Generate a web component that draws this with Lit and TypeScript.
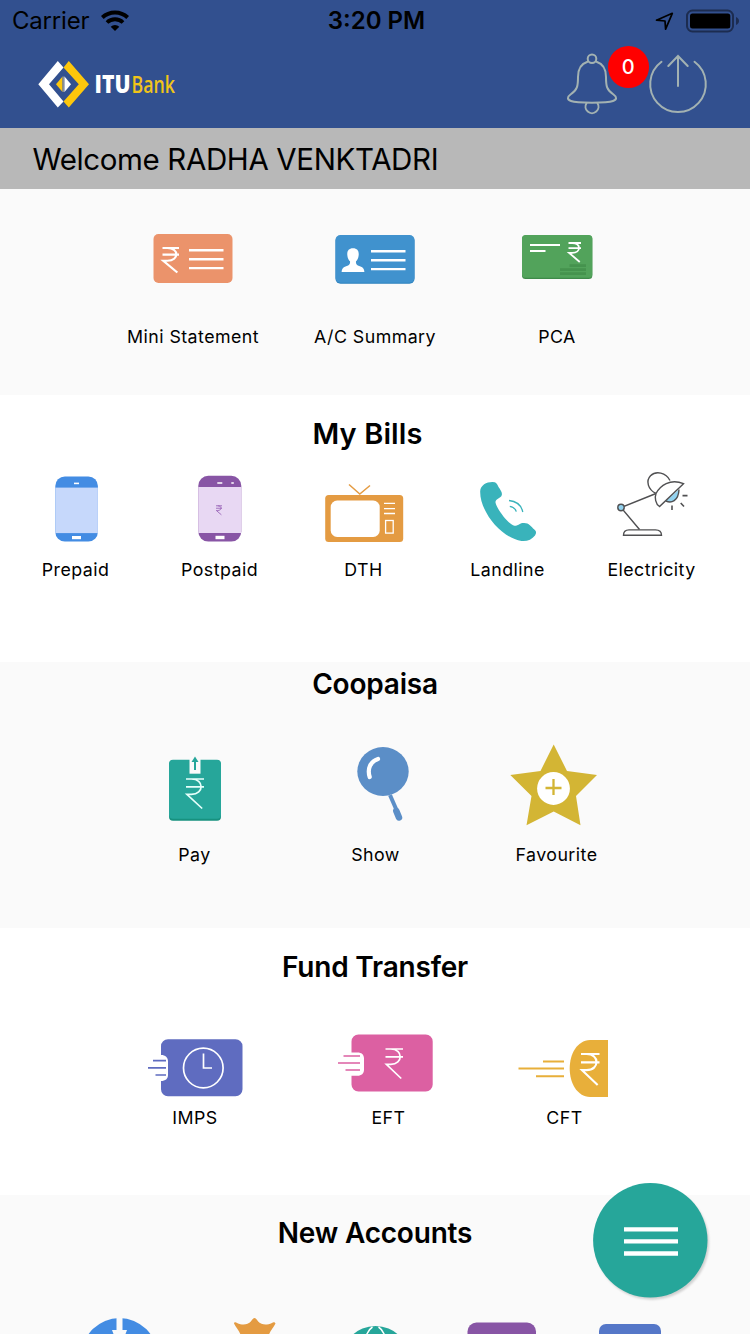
import { LitElement, html, svg, css, TemplateResult, SVGTemplateResult } from "lit";
import { customElement } from "lit/decorators.js";

interface Tile {
  label: string;
  art: SVGTemplateResult;
}

/* Rupee sign drawn with strokes inside the given box. */
const rupee = (x: number, y: number, w: number, h: number, sw: number, color = "#fff") => {
  const mid = y + h * 0.27;
  const low = y + h * 0.52;
  return svg`<path fill="none" stroke=${color} stroke-width=${sw}
    d="M${x} ${y}H${x + w}M${x} ${mid}H${x + w}M${x + w * 0.3} ${y}C${x + w * 1.02} ${y} ${x + w * 1.02} ${low} ${x + w * 0.3} ${low}H${x + w * 0.05}L${x + w * 0.9} ${y + h}"/>`;
};

const quick: Tile[] = [
  {
    label: "Mini Statement",
    art: svg`<svg class="icon" width="182" height="60" viewBox="102 229 182 60">
      <rect x="153.5" y="234" width="79" height="49" rx="5" fill="#eb936b"/>
      ${rupee(162.5, 248, 16.5, 24.5, 2.2)}
      <path d="M189 250.3h34.5M189 259.2h34.5M189 268.1h34.5" stroke="#fff" stroke-width="2.4"/></svg>`,
  },
  {
    label: "A/C Summary",
    art: svg`<svg class="icon" width="182" height="60" viewBox="284 229 182 60">
      <rect x="335.5" y="235.8" width="79" height="48" rx="5" fill="#2a80bd"/>
      <rect x="335.5" y="235" width="79" height="47.8" rx="5" fill="#4092ce"/>
      <path d="M353 248.3c4.300 0 6 2.600 5.700 6.600c-.2 3.500-1.600 5.200-2.700 6.400c-.4 3.500 1 4 4.500 5.300c2.600 1 3.700 2.400 3.900 5.400h-22.800c.2-3 1.300-4.400 3.900-5.400c3.500-1.300 4.900-1.800 4.500-5.300c-1.100-1.200-2.500-2.900-2.700-6.400c-.3-4 1.400-6.600 5.700-6.600z" fill="#fff"/>
      <path d="M371 251.300h34.500M371 260.200h34.500M371 269.100h34.500" stroke="#fff" stroke-width="2.400"/></svg>`,
  },
  {
    label: "PCA",
    art: svg`<svg class="icon" width="182" height="60" viewBox="466 229 182 60">
      <rect x="522" y="235.500" width="70.300" height="43.500" rx="3.500" fill="#3e8a49"/>
      <rect x="522" y="235" width="70.300" height="42.800" rx="3.500" fill="#52a35b"/>
      <path d="M530 245h30M530 251h15.500" stroke="#fff" stroke-width="1.800"/>
      <path d="M569.500 265.700h16.500M560 269.600h26M560 273.600h26" stroke="#45934e" stroke-width="2.700"/>
      ${rupee(568.5, 243, 12.5, 19, 1.8)}</svg>`,
  },
];

const bills: Tile[] = [
  {
    label: "Prepaid",
    art: svg`<svg class="icon" width="144" height="80" viewBox="3 468 144 80">
      <rect x="55.300" y="476.500" width="42.600" height="65" rx="9.500" fill="#438ce3"/>
      <rect x="55.300" y="487.600" width="42.600" height="45.500" fill="#c6d8fb"/>
      <path d="M74 483.400h5" stroke="#fff" stroke-width="1.600"/>
      <rect x="72" y="536" width="9" height="3.200" fill="#fff"/></svg>`,
  },
  {
    label: "Postpaid",
    art: svg`<svg class="icon" width="144" height="80" viewBox="147 468 144 80">
      <rect x="198.300" y="475.800" width="43" height="65.800" rx="10" fill="#8855a5"/>
      <rect x="198.300" y="487" width="43" height="46" fill="#e8d8f3"/>
      <path d="M217.300 483h5M231.300 483h2.500" stroke="#fff" stroke-width="1.600"/>
      <rect x="215.500" y="535.800" width="9" height="3.400" fill="#fff"/>
      ${rupee(216, 505.8, 6, 9, 0.9, "#9a65b8")}</svg>`,
  },
  {
    label: "DTH",
    art: svg`<svg class="icon" width="144" height="80" viewBox="291 468 144 80">
      <path d="M349 484.500L359.800 494L370 485.500" fill="none" stroke="#e49b42" stroke-width="1.500"/>
      <rect x="325.200" y="495" width="78" height="47" rx="3.500" fill="#e49b42"/>
      <rect x="330.700" y="500.500" width="49" height="36.500" rx="6.500" fill="#fff"/>
      <path d="M384 503.400h11M384 508.600h11M384 513.500h11" stroke="#fff" stroke-width="1.300"/>
      <rect x="385.600" y="520.500" width="7.600" height="12.600" fill="none" stroke="#fff" stroke-width="1.300"/></svg>`,
  },
  {
    label: "Landline",
    art: svg`<svg class="icon" width="144" height="80" viewBox="435 468 144 80">
      <path d="M480.200 491C480.500 485 487 481.700 493 482C496 482.200 497 483.500 498.500 487C500.500 490 502.500 492.500 501.800 495C501 498.500 495 498.800 495.500 502.500C496.500 508.500 508 524 514.500 525.800C518.500 526 519 523 523.500 523C529 522.700 531 526.500 534.300 529.500C536.500 531.500 536.600 533 535 535.500C532 539.500 527 541.600 521.500 541C501 538 479.500 511 480.200 491Z" fill="#39b3bb"/>
      <path d="M509 500.500c7.500.7 12.300 4.800 13.800 11.500M509.800 506.300c3.500.5 5.500 2.300 6.500 5.300" fill="none" stroke="#39b3bb" stroke-width="1.300"/></svg>`,
  },
  {
    label: "Electricity",
    art: svg`<svg class="icon" width="144" height="80" viewBox="579 468 144 80">
      <g stroke="#505052" stroke-width="1.400" fill="none">
        <path d="M656 493.500L621 507.500L639.500 529.500"/>
        <path d="M656 493.500C648 489.500 645.500 481 650.500 475.800C656 470.500 666 472.500 670 480.500"/>
        <path d="M666 501C671 503.500 678.500 501.500 679 489.500" fill="#92d2ef"/>
        <path d="M659.500 506.500C655.500 504 654.500 497.500 656 493.500C660 486 670 478 683.500 483.700Z" fill="#fff"/>
        <circle cx="621" cy="507.500" r="3.200" fill="#92d2ef"/>
        <path d="M623.500 535.200c0-4 2-5.300 5.500-5.300h26.500c4 0 6 2 6 5.300z" fill="#fff"/>
      </g>
      <path d="M682.500 495.600h5M680.700 503l3.300 3.500M672 505.500v4.500" stroke="#505052" stroke-width="1.600"/></svg>`,
  },
];

const coopaisa: Tile[] = [
  {
    label: "Pay",
    art: svg`<svg class="icon" width="181" height="90" viewBox="104 740 181 90">
      <rect x="169" y="761" width="52" height="59.800" rx="4" fill="#17917f"/>
      <rect x="169" y="759.800" width="52" height="59" rx="4" fill="#26a69a"/>
      <rect x="189.500" y="757" width="11" height="16.700" fill="#fafafa"/>
      <path d="M195 770v-11" stroke="#26a69a" stroke-width="2"/><path d="M191.500 762l3.500-5.500 3.500 5.500z" fill="#26a69a"/>
      ${rupee(186, 779, 18, 29.5, 1.7, "#e6fffb")}</svg>`,
  },
  {
    label: "Show",
    art: svg`<svg class="icon" width="181" height="90" viewBox="285 740 181 90">
      <ellipse cx="383" cy="771.500" rx="25.700" ry="24.400" fill="#5b8ec7"/>
      <path d="M390 795l6.500 15" stroke="#5b8ec7" stroke-width="4"/>
      <path d="M396.300 811l2.700 6.500" stroke="#5b8ec7" stroke-width="6.500" stroke-linecap="round"/>
      <path d="M378 759c-7.500 2.500-11 9.500-8.300 18" fill="none" stroke="#fff" stroke-width="4.200" stroke-linecap="round"/></svg>`,
  },
  {
    label: "Favourite",
    art: svg`<svg class="icon" width="181" height="90" viewBox="466 740 181 90">
      <path d="M553.700 744.500L567 771L597 775L576 796L580.500 825.300L553.700 811.500L526.500 825.300L531.500 796L510.300 775L540.500 771Z" fill="#d3b534"/>
      <circle cx="553.500" cy="788.500" r="16.400" fill="#fff"/>
      <path d="M545.500 788h16M553.500 779v16" stroke="#d3b534" stroke-width="2.300"/></svg>`,
  },
];

const transfer: Tile[] = [
  {
    label: "IMPS",
    art: svg`<svg class="icon" width="194" height="76" viewBox="98 1028 194 76">
      <path d="M168 1039.300h67.500a7 7 0 0 1 7 7v43a7 7 0 0 1-7 7h-67.500a7 7 0 0 1-7-7v-8.300c4.500 0 7-2.300 7-6v-13.500c0-4-2.500-6.500-7-6.500v-8.700a7 7 0 0 1 7-7z" fill="#5f6cc0"/>
      <path d="M153 1060.700h13M148 1067.800h18M155.500 1075h10.500" stroke="#5f6cc0" stroke-width="1.700"/>
      <circle cx="203.300" cy="1068" r="19.800" fill="none" stroke="#fff" stroke-width="1.700"/>
      <path d="M203.500 1053.500v14.500h8.500" fill="none" stroke="#fff" stroke-width="1.700"/></svg>`,
  },
  {
    label: "EFT",
    art: svg`<svg class="icon" width="193" height="76" viewBox="292 1028 193 76">
      <path d="M358.500 1034.500h67.200a7 7 0 0 1 7 7v43a7 7 0 0 1-7 7h-67.200a7 7 0 0 1-7-7v-8.800h6c4 0 6.500-2.300 6.500-6v-11.200c0-4-2.500-6-6.500-6h-6v-11a7 7 0 0 1 7-7z" fill="#dc60a2"/>
      <path d="M343.500 1056h16.500M338 1063h22M345.500 1070h14.500" stroke="#dc60a2" stroke-width="1.700"/>
      ${rupee(385.5, 1049, 17.5, 29.5, 1.7)}</svg>`,
  },
  {
    label: "CFT",
    art: svg`<svg class="icon" width="159" height="76" viewBox="485 1028 159 76">
      <path d="M608 1040V1097H590C577 1096.500 569.700 1083 569.700 1068.500C569.700 1054 577 1040.500 590 1040Z" fill="#e8af3a"/>
      <path d="M543 1061.500h21M518.500 1068.500h45.500M536 1076.300h28" stroke="#e8af3a" stroke-width="2"/>
      ${rupee(581, 1054, 18.5, 31, 2.1)}</svg>`,
  },
];

const accountsArt = svg`<svg class="accounts" width="750" height="18" viewBox="0 1316 750 18">
  <circle cx="119.500" cy="1355.800" r="37.800" fill="#438ce3"/>
  <path d="M116.500 1316h6v14h4.500l-3 8h-9l-3-8h4.500z" fill="#fafafa"/>
  <path d="M234 1323.500c0-1.500 2-1.500 3-.6c4 1.800 7.500 1.800 10.500 .9c3-1.200 4-3.200 5.500-5c1-1 2-1 3 0c1.500 1.800 2.500 3.800 5.500 5c3 .9 6.500.9 10.500-.9c1-.9 3-.9 3.500.6c-2 4-5 7-6.500 11h-28.500c-1.500-4-4.500-7-6.500-11z" fill="#e49b42"/>
  <circle cx="375.500" cy="1360" r="34" fill="#26a69a"/>
  <path d="M372.500 1327q-4 2.500-6 8M378.500 1327q4 2.500 6 8" fill="none" stroke="#fff" stroke-width="1.500"/>
  <rect x="467.500" y="1322.500" width="68.500" height="40" rx="9" fill="#8855a5"/>
  <rect x="599" y="1324" width="62" height="40" rx="7" fill="#5577c8"/></svg>`;

@customElement("app-root")
export class AppRoot extends LitElement {
  static styles = css`
    :host {
      display: block;
      position: relative;
      width: 750px;
      height: 1334px;
      overflow: hidden;
      background: #fff;
      color: #000;
      font-family: Inter, "Liberation Sans", sans-serif;
    }
    svg { display: block; flex: none; }
    .top { background: #32508f; height: 128px; }
    .status {
      display: grid;
      grid-template-columns: 1fr auto 1fr;
      align-items: center;
      height: 41px;
      padding: 0 11px 0 12px;
      font-size: 24px;
      line-height: 41px;
    }
    .left, .right { display: flex; align-items: center; }
    .left { gap: 12px; }
    .carrier { letter-spacing: -0.2px; }
    .right { justify-content: flex-end; }
    .clock { padding-left: 2px; font-weight: 600; letter-spacing: 0; }
    .bar { display: flex; justify-content: space-between; height: 87px; padding: 0 36px; }
    .logo-bold { font: 800 24px "Open Sans", sans-serif; }
    .logo-thin { font: 600 24px "Open Sans", sans-serif; }
    .actions { position: relative; }
    .badge {
      position: absolute;
      left: 47.500px;
      top: 5px;
      width: 41.500px;
      height: 41.500px;
      border-radius: 50%;
      background: #f00;
      color: #fff;
      font-size: 20px;
      font-weight: 500;
      line-height: 42px;
      text-align: center;
    }
    .welcome {
      height: 61px;
      padding-left: 32.500px;
      box-sizing: border-box;
      background: #b8b8b8;
      font-size: 29.500px;
      line-height: 62px;
      letter-spacing: -0.37px;
    }
    section { box-sizing: border-box; display: flex; flex-direction: column; }
    .shade { background: #fafafa; }
    h2 {
      margin: 0;
      text-align: center;
      font-size: 28px;
      font-weight: 600;
      line-height: 34px;
      letter-spacing: -0.2px;
    }
    .row { display: grid; }
    .tile { display: flex; flex-direction: column; align-items: center; }
    .label { font-size: 17.800px; line-height: 24px; letter-spacing: 0.45px; white-space: nowrap; }
    .quick { height: 206px; padding-top: 40px; }
    .quick .row { grid-template-columns: repeat(3, 182px); padding-left: 102px; }
    .quick .tile { gap: 36px; }
    .bills { height: 267px; padding-top: 22px; gap: 17px; }
    .bills h2 { padding-right: 15px; font-size: 29px; letter-spacing: 0.1px; }
    .bills .row { grid-template-columns: repeat(5, 144px); padding-left: 3px; }
    .bills .tile { gap: 10px; }
    .bills .label { padding-left: 1px; }
    .coop { height: 266px; padding-top: 5px; gap: 39px; }
    .coop .row { grid-template-columns: repeat(3, 181px); padding-left: 104px; }
    .coop .tile { gap: 13px; }
    .fund { height: 267px; padding-top: 22px; gap: 44px; }
    .fund .row { grid-template-columns: 194px 193px 159px; padding-left: 98px; }
    .fund .tile { gap: 2px; }
    .new { height: 139px; padding-top: 21px; gap: 66px; }
    .fab {
      position: absolute;
      left: 588px;
      top: 1178px;
    }
  `;

  private tiles(items: Tile[]): TemplateResult {
    return html`<div class="row">
      ${items.map((t) => html`<div class="tile">${t.art}<span class="label">${t.label}</span></div>`)}
    </div>`;
  }

  render() {
    return html`
      <header class="top">
        <div class="status">
          <div class="left">
            <span class="carrier">Carrier</span>
            <svg width="28" height="22" viewBox="101 9 28 22">
              <path d="M102.300 16.500a18.500 18.500 0 0 1 25.400 0" fill="none" stroke="#000" stroke-width="4"/>
              <path d="M107 21.500a11.500 11.500 0 0 1 16 0" fill="none" stroke="#000" stroke-width="3.800"/>
              <path d="M115 30l-4.300-4.200a6.200 6.200 0 0 1 8.600 0z"/>
            </svg>
          </div>
          <span class="clock">3:20 PM</span>
          <div class="right">
            <svg width="85" height="24" viewBox="654 8.500 85 24">
              <path d="M656.500 19.700L672.300 12.800L665.600 28.700L665 20.500Z" fill="none" stroke="#000" stroke-width="1.700" stroke-linejoin="round"/>
              <rect x="687" y="10" width="46" height="21" rx="5.500" fill="none" stroke="#1c2c50" stroke-width="2"/>
              <rect x="690" y="13" width="40.300" height="15" rx="2.500"/>
              <path d="M736 16.500c4 1.500 4 6.500 0 8z" fill="#1c2c50"/>
            </svg>
          </div>
        </div>
        <div class="bar">
          <svg width="160" height="87" viewBox="36 41 160 87">
            <path d="M57.800 61L63.500 67.500L49 84.300L63.500 101.500L57.800 107.500L38.300 84.300Z" fill="#fff"/>
            <path d="M68.800 61L89 84.300L68.800 107.500L63.500 101.500L78.800 84.300L63.500 67.500Z" fill="#fdc70c"/>
            <path d="M56 84.300L62.500 76.500V92Z" fill="#fdc70c"/>
            <path d="M62.500 76.500h2v15.500h-2z" fill="#8a8f98"/>
            <path d="M71 84.300L64.500 76.500V92Z" fill="#fff"/>
            <text class="logo-bold" x="94.500" y="93" textLength="36" lengthAdjust="spacingAndGlyphs" fill="#fff">ITU</text>
            <text class="logo-thin" x="131.500" y="93" textLength="43.500" lengthAdjust="spacingAndGlyphs" fill="#f0c419">Bank</text>
          </svg>
          <div class="actions">
            <svg width="154" height="87" viewBox="560 41 154 87">
              <g fill="none" stroke="#a3b2b2" stroke-width="2" stroke-linecap="round">
                <circle cx="592" cy="58.800" r="4.300"/>
                <path d="M587.500 61.800C580.500 64 578 70 578 77C578 86 577.500 90 570.500 94.500C567 97 567 99.500 571 101C577 103.200 607 103.200 613 101C617 99.500 617 97 613.500 94.500C606.500 90 606 86 606 77C606 70 603.500 64 596.500 61.800"/>
                <path d="M586.500 103.200a6.500 6.500 0 1 0 11 0"/>
                <path d="M661.500 61.800a27.800 27.800 0 1 0 33 0"/>
                <path d="M678 86V56M668.300 66L678 56L687.700 66"/>
              </g>
            </svg>
            <div class="badge">0</div>
          </div>
        </div>
      </header>
      <div class="welcome">Welcome RADHA VENKTADRI</div>
      <section class="quick shade">${this.tiles(quick)}</section>
      <section class="bills"><h2>My Bills</h2>${this.tiles(bills)}</section>
      <section class="coop shade"><h2>Coopaisa</h2>${this.tiles(coopaisa)}</section>
      <section class="fund"><h2>Fund Transfer</h2>${this.tiles(transfer)}</section>
      <section class="new shade"><h2>New Accounts</h2>${accountsArt}</section>
      <svg class="fab" width="128" height="126" viewBox="588 1178 128 126">
        <defs><filter id="soft"><feGaussianBlur stdDeviation="1"/></filter></defs>
        <circle cx="652" cy="1242.700" r="57" fill="#d0d0d0" filter="url(#soft)"/>
        <circle cx="650.300" cy="1240.300" r="57.200" fill="#26a69a"/>
        <path d="M624 1229.300h54M624 1241.300h54M624 1253.500h54" stroke="#fff" stroke-width="4.300"/>
      </svg>
    `;
  }
}
